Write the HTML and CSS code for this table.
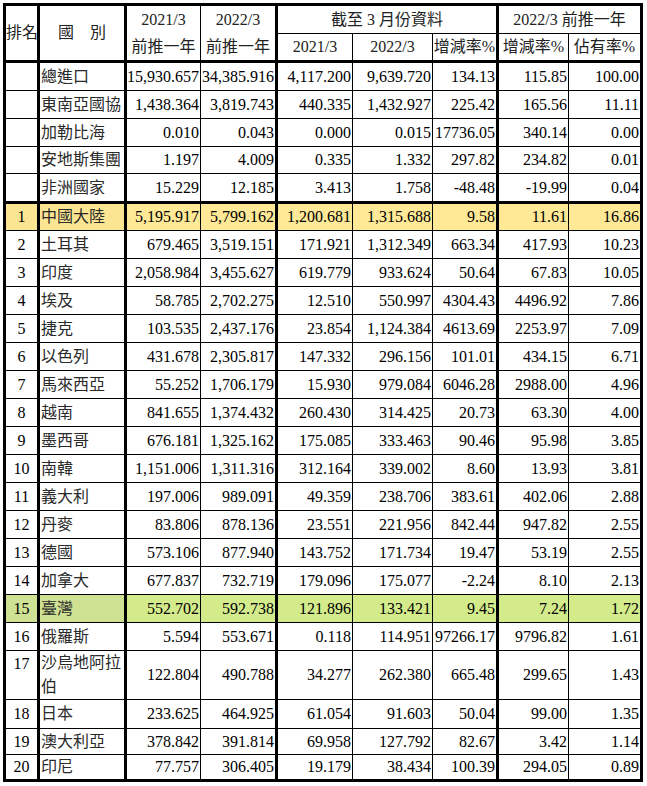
FILE: index.html
```html
<!DOCTYPE html>
<html lang="zh-Hant">
<head>
<meta charset="utf-8">
<title>排名</title>
<link rel="stylesheet" href="styles.css">
</head>
<body>
<table class="tbl">
  <colgroup>
    <col class="w1"><col class="w2"><col class="w3"><col class="w4"><col class="w5"><col class="w6"><col class="w7"><col class="w8"><col class="w9">
  </colgroup>
  <thead>
    <tr class="ha">
      <th rowspan="2" class="hrank thick">排名</th>
      <th rowspan="2" class="hname thick">國　別</th>
      <th rowspan="2" class="hyear">2021/3<br>前推一年</th>
      <th rowspan="2" class="hyear thick">2022/3<br>前推一年</th>
      <th colspan="3" class="thick">截至 3 月份資料</th>
      <th colspan="2" class="thick">2022/3 前推一年</th>
    </tr>
    <tr class="hb">
      <th class="sub">2021/3</th>
      <th class="sub">2022/3</th>
      <th class="sub thick">增減率%</th>
      <th class="sub">增減率%</th>
      <th class="sub thick">佔有率%</th>
    </tr>
  </thead>
  <tbody>
    <tr class="h28"><td></td><td>總進口</td><td>15,930.657</td><td>34,385.916</td><td>4,117.200</td><td>9,639.720</td><td>134.13</td><td>115.85</td><td>100.00</td></tr>
    <tr class="h28"><td></td><td>東南亞國協</td><td>1,438.364</td><td>3,819.743</td><td>440.335</td><td>1,432.927</td><td>225.42</td><td>165.56</td><td>11.11</td></tr>
    <tr class="h28"><td></td><td>加勒比海</td><td>0.010</td><td>0.043</td><td>0.000</td><td>0.015</td><td>17736.05</td><td>340.14</td><td>0.00</td></tr>
    <tr class="h27"><td></td><td>安地斯集團</td><td>1.197</td><td>4.009</td><td>0.335</td><td>1.332</td><td>297.82</td><td>234.82</td><td>0.01</td></tr>
    <tr class="h30 sep"><td></td><td>非洲國家</td><td>15.229</td><td>12.185</td><td>3.413</td><td>1.758</td><td>-48.48</td><td>-19.99</td><td>0.04</td></tr>
    <tr class="h27 hl-yellow"><td>1</td><td>中國大陸</td><td>5,195.917</td><td>5,799.162</td><td>1,200.681</td><td>1,315.688</td><td>9.58</td><td>11.61</td><td>16.86</td></tr>
    <tr class="h28"><td>2</td><td>土耳其</td><td>679.465</td><td>3,519.151</td><td>171.921</td><td>1,312.349</td><td>663.34</td><td>417.93</td><td>10.23</td></tr>
    <tr class="h28"><td>3</td><td>印度</td><td>2,058.984</td><td>3,455.627</td><td>619.779</td><td>933.624</td><td>50.64</td><td>67.83</td><td>10.05</td></tr>
    <tr class="h28"><td>4</td><td>埃及</td><td>58.785</td><td>2,702.275</td><td>12.510</td><td>550.997</td><td>4304.43</td><td>4496.92</td><td>7.86</td></tr>
    <tr class="h28"><td>5</td><td>捷克</td><td>103.535</td><td>2,437.176</td><td>23.854</td><td>1,124.384</td><td>4613.69</td><td>2253.97</td><td>7.09</td></tr>
    <tr class="h28"><td>6</td><td>以色列</td><td>431.678</td><td>2,305.817</td><td>147.332</td><td>296.156</td><td>101.01</td><td>434.15</td><td>6.71</td></tr>
    <tr class="h28"><td>7</td><td>馬來西亞</td><td>55.252</td><td>1,706.179</td><td>15.930</td><td>979.084</td><td>6046.28</td><td>2988.00</td><td>4.96</td></tr>
    <tr class="h28"><td>8</td><td>越南</td><td>841.655</td><td>1,374.432</td><td>260.430</td><td>314.425</td><td>20.73</td><td>63.30</td><td>4.00</td></tr>
    <tr class="h28"><td>9</td><td>墨西哥</td><td>676.181</td><td>1,325.162</td><td>175.085</td><td>333.463</td><td>90.46</td><td>95.98</td><td>3.85</td></tr>
    <tr class="h28"><td>10</td><td>南韓</td><td>1,151.006</td><td>1,311.316</td><td>312.164</td><td>339.002</td><td>8.60</td><td>13.93</td><td>3.81</td></tr>
    <tr class="h28"><td>11</td><td>義大利</td><td>197.006</td><td>989.091</td><td>49.359</td><td>238.706</td><td>383.61</td><td>402.06</td><td>2.88</td></tr>
    <tr class="h28"><td>12</td><td>丹麥</td><td>83.806</td><td>878.136</td><td>23.551</td><td>221.956</td><td>842.44</td><td>947.82</td><td>2.55</td></tr>
    <tr class="h28"><td>13</td><td>德國</td><td>573.106</td><td>877.940</td><td>143.752</td><td>171.734</td><td>19.47</td><td>53.19</td><td>2.55</td></tr>
    <tr class="h28"><td>14</td><td>加拿大</td><td>677.837</td><td>732.719</td><td>179.096</td><td>175.077</td><td>-2.24</td><td>8.10</td><td>2.13</td></tr>
    <tr class="h28 hl-green"><td>15</td><td>臺灣</td><td>552.702</td><td>592.738</td><td>121.896</td><td>133.421</td><td>9.45</td><td>7.24</td><td>1.72</td></tr>
    <tr class="h28"><td>16</td><td>俄羅斯</td><td>5.594</td><td>553.671</td><td>0.118</td><td>114.951</td><td>97266.17</td><td>9796.82</td><td>1.61</td></tr>
    <tr class="h48 tall"><td>17</td><td>沙烏地阿拉伯</td><td>122.804</td><td>490.788</td><td>34.277</td><td>262.380</td><td>665.48</td><td>299.65</td><td>1.43</td></tr>
    <tr class="h29"><td>18</td><td>日本</td><td>233.625</td><td>464.925</td><td>61.054</td><td>91.603</td><td>50.04</td><td>99.00</td><td>1.35</td></tr>
    <tr class="h26"><td>19</td><td>澳大利亞</td><td>378.842</td><td>391.814</td><td>69.958</td><td>127.792</td><td>82.67</td><td>3.42</td><td>1.14</td></tr>
    <tr class="h27 last"><td>20</td><td>印尼</td><td>77.757</td><td>306.405</td><td>19.179</td><td>38.434</td><td>100.39</td><td>294.05</td><td>0.89</td></tr>
  </tbody>
</table>
</body>
</html>
```

FILE: styles.css
```css
html, body {
  margin: 0;
  padding: 0;
  background: #ffffff;
}

.tbl {
  margin: 3px 0 0 3px;
  width: 640px;
  table-layout: fixed;
  border-collapse: separate;
  border-spacing: 0;
  border-top: 3px solid #000;
  border-left: 3px solid #000;
  font-family: "Liberation Serif", "Noto Sans CJK TC", serif;
  font-size: 16px;
  color: #000;
}

.w1 { width: 34px; }
.w2 { width: 87px; }
.w3 { width: 74px; }
.w4 { width: 77px; }
.w5 { width: 75px; }
.w6 { width: 80px; }
.w7 { width: 66px; }
.w8 { width: 70px; }
.w9 { width: 74px; }

.tbl th,
.tbl td {
  padding: 0;
  border-right: 1px solid #000;
  border-bottom: 1px solid #000;
  line-height: 20px;
  white-space: nowrap;
  overflow: visible;
}

.tbl th {
  font-weight: normal;
  text-align: center;
  vertical-align: middle;
  color: #222;
}

.tbl th.thick { border-right-width: 3px; }

.ha { height: 28px; }
.hb { height: 29px; }

.tbl th.sub,
.tbl th[rowspan] { border-bottom-width: 3px; }

.tbl th.hrank {
  text-align: left;
  padding-left: 0;
}

.tbl th.hyear { line-height: 27px; }

.tbl td {
  text-align: right;
  vertical-align: middle;
  padding-right: 1px;
}

.tbl td:nth-child(1) {
  text-align: center;
  padding-right: 0;
  border-right-width: 3px;
}

.tbl td:nth-child(2) {
  text-align: left;
  padding-left: 1px;
  padding-right: 0;
  border-right-width: 3px;
  color: #2a2a2a;
}

.tbl td:nth-child(4),
.tbl td:nth-child(7),
.tbl td:nth-child(9) {
  border-right-width: 3px;
}

.h26 { height: 26px; }
.h27 { height: 27px; }
.h28 { height: 28px; }
.h29 { height: 29px; }
.h30 { height: 30px; }
.h48 { height: 48px; }

.sep td,
.last td { border-bottom-width: 3px; }

.tall td:nth-child(1) {
  vertical-align: top;
  padding-top: 3px;
}

.tall td:nth-child(2) {
  white-space: normal;
  line-height: 24px;
}

.hl-yellow td { background: #ffe896; }
.hl-yellow td:nth-child(1),
.hl-yellow td:nth-child(2) { background: #fbe592; }

.hl-green td { background: #d4eb8c; }
.hl-green td:nth-child(1),
.hl-green td:nth-child(2) { background: #cfe192; }
```
